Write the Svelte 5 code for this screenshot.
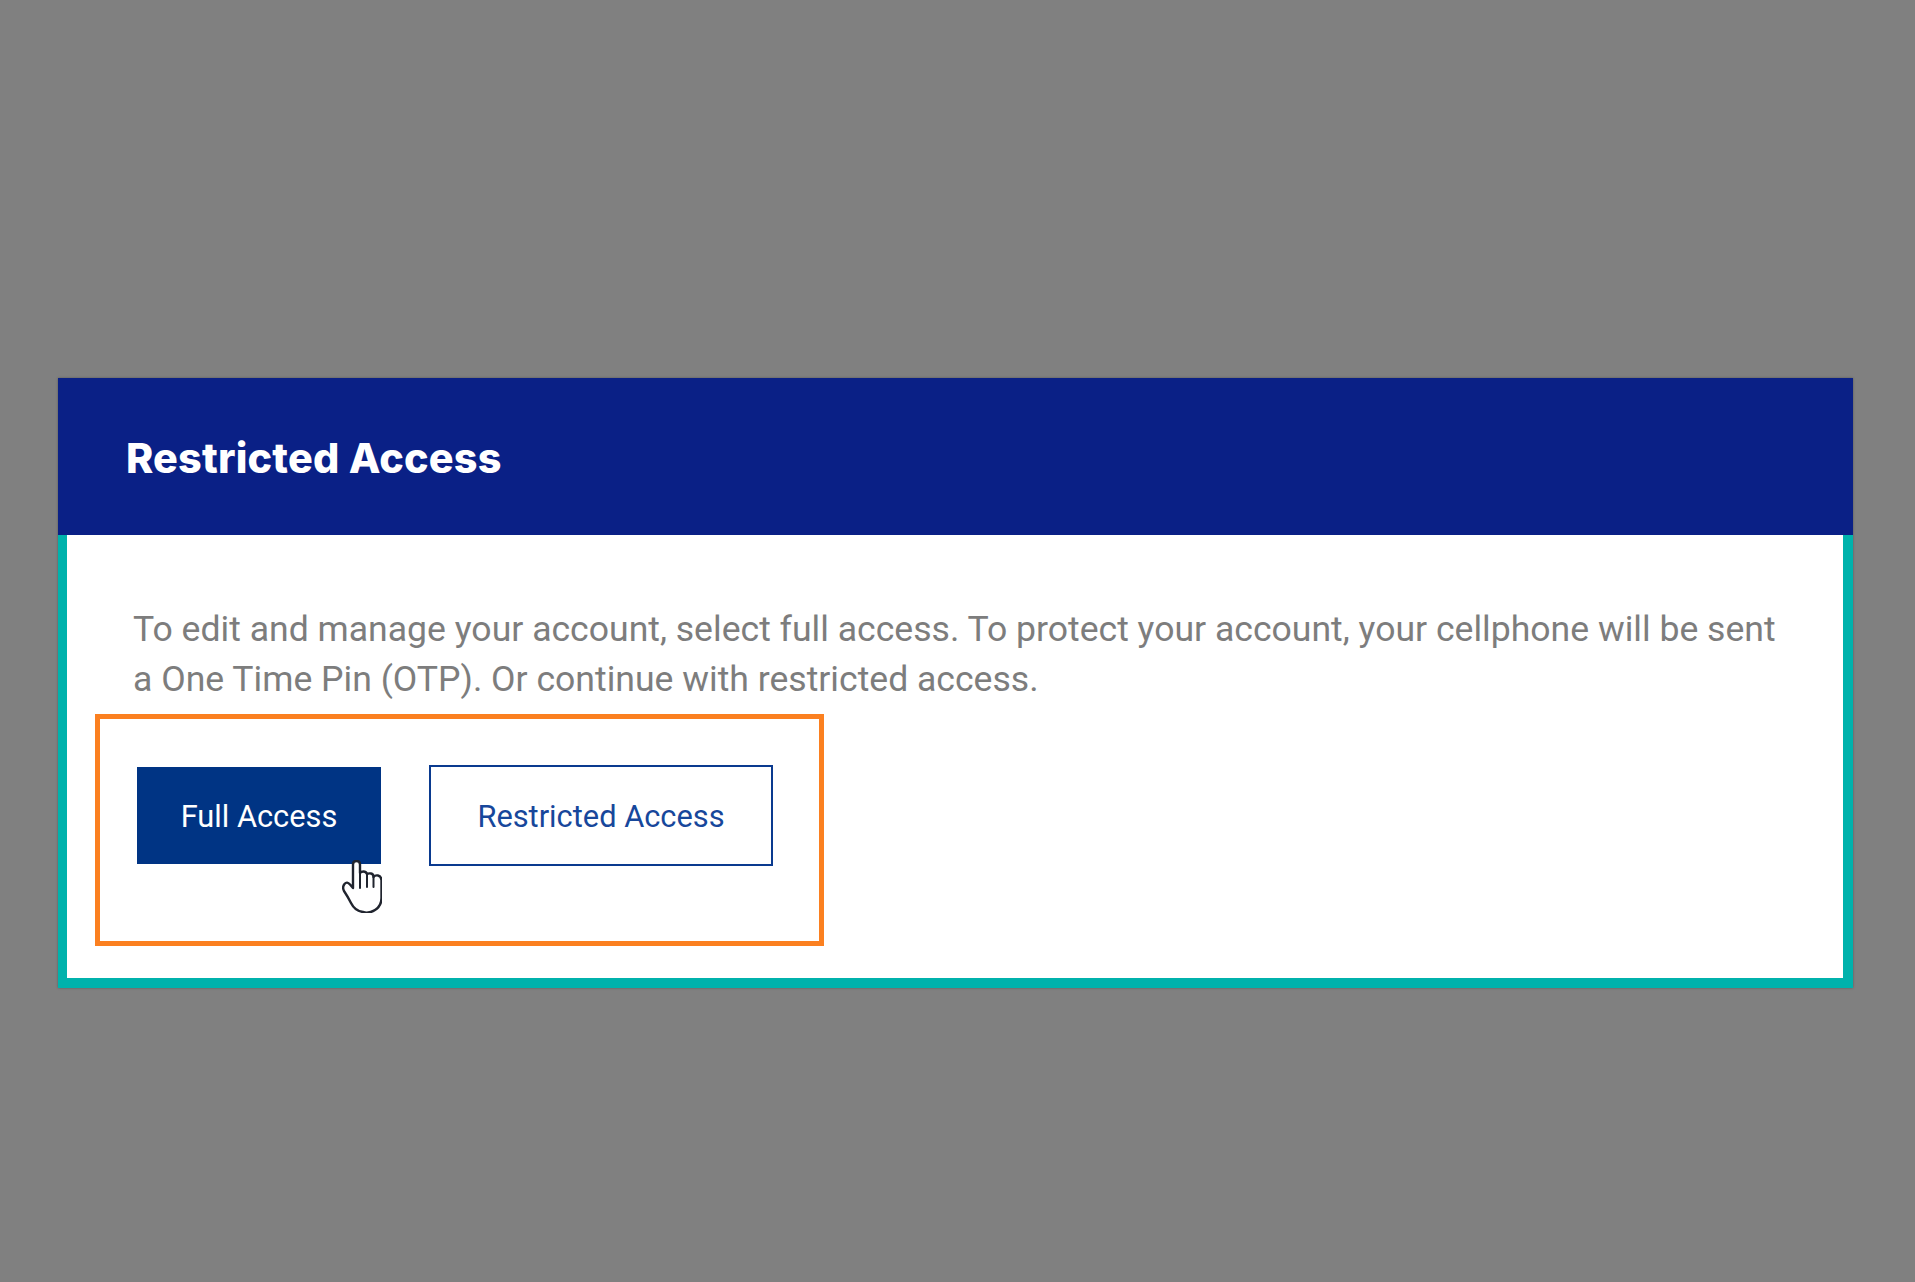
<script>
  const heading = 'Restricted Access';
  const intro =
    'To edit and manage your account, select full access. To protect your account, your cellphone will be sent a One Time Pin (OTP). Or continue with restricted access.';
</script>

<main class="page">
  <section class="card">
    <header class="card-header">
      <h1>{heading}</h1>
    </header>

    <div class="card-body">
      <p>{intro}</p>

      <div class="actions">
        <button type="button" class="btn primary">
          Full Access
          <svg class="pointer" viewBox="0 0 40 53" aria-hidden="true">
            <path
              d="M11 28V4.5Q11 1 14.5 1T18 4.500V13Q19 11.500 21.500 11.500T25 14Q26.500 13 29 13.500T31.500 17Q33 15 36 15.500T39.500 20V38Q39.500 46 33 50T21 52Q13 51 9 43Q6 37 2 31Q0 27 2.500 24T8 24.500Z"
              fill="#fff"
              stroke="#20242e"
              stroke-width="2.400"
              stroke-linejoin="round"
            />
            <path d="M18 13V28M25 14V27M31.500 17V27" fill="none" stroke="#20242e" stroke-width="2" stroke-linecap="round" />
          </svg>
        </button>
        <button type="button" class="btn secondary">Restricted Access</button>
      </div>

      <div class="highlight"></div>
    </div>
  </section>
</main>

<style>
  :global(body) {
    background: #808080;
  }

  .page {
    min-height: 1282px;
    box-sizing: border-box;
    padding: 378px 62px 0 58px;
    background: #808080;
  }

  .card {
    box-shadow: 0 0 2px rgba(60, 60, 60, 0.6);
  }

  .card-header {
    height: 157px;
    box-sizing: border-box;
    padding: 5px 68px 0;
    display: flex;
    align-items: center;
    background: #0a2086;
  }

  h1 {
    margin: 0;
    color: #fff;
    font: 800 41.300px/1 Inter, "Liberation Sans", sans-serif;
    letter-spacing: 0.2px;
  }

  .card-body {
    position: relative;
    padding: 70px 56px 112px 66px;
    background: #fff;
    border: solid #00b2ac;
    border-width: 0 10px 10px 9px;
  }

  p {
    margin: 0;
    color: #7d7d7d;
    font: 400 35.600px/49.500px Roboto, "Liberation Sans", sans-serif;
  }

  .actions {
    display: flex;
    align-items: center;
    gap: 48px;
    margin-top: 61px;
    margin-left: 4px;
  }

  .btn {
    box-sizing: border-box;
    padding: 3px 0 0;
    font: 400 30.800px/1 Roboto, "Liberation Sans", sans-serif;
    cursor: pointer;
  }

  .primary {
    position: relative;
    width: 244px;
    height: 97px;
    border: none;
    background: #003484;
    color: #fff;
  }

  .secondary {
    width: 344px;
    height: 101px;
    border: 2px solid #0a3a8f;
    background: #fff;
    color: #17479b;
  }

  .pointer {
    position: absolute;
    left: 205px;
    top: 93px;
    width: 40px;
    height: 53px;
  }

  .highlight {
    position: absolute;
    left: 28px;
    top: 179px;
    width: 729px;
    height: 232px;
    box-sizing: border-box;
    border: 5px solid #fb8020;
    pointer-events: none;
  }
</style>
